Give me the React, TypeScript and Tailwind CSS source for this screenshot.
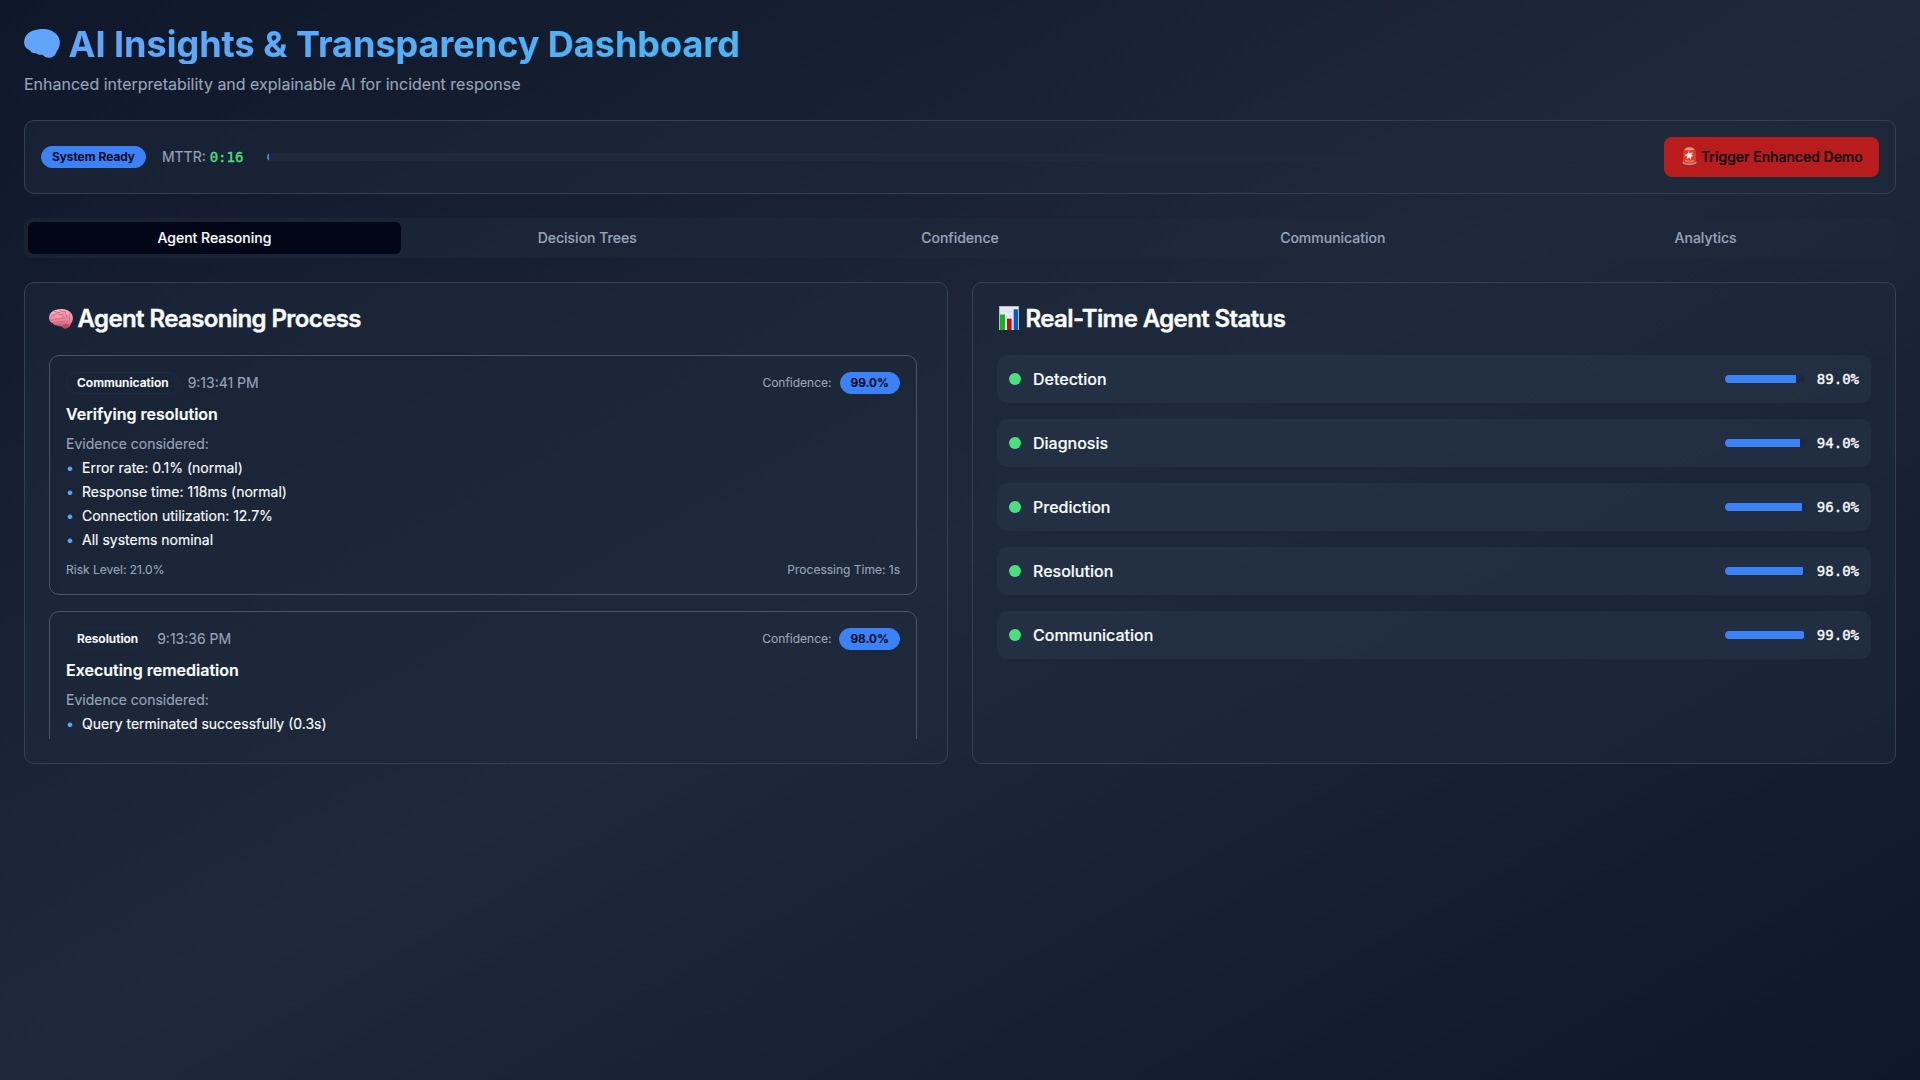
import React from "react";

const BRAIN =
  "M1 15C.5 9 4 4 10 2.2 15 .4 22 0 27 2c5 2 8.500 6 8.800 11 .2 4-1 7.500-3 9.500-.6 3-3.500 6.500-7.800 6.500-2.500 0-4.500-1-6-3-2.500.3-5-.2-6.500-1.500-3 .2-5-.8-6-3C3 20.500 1.300 18 1 15Z";

function BrainShape({ className }: { className: string }) {
  return (
    <svg viewBox="0.8 0.6 35.200 28.600" className={className} preserveAspectRatio="none" aria-hidden="true">
      <path d={BRAIN} fill="#60a5fa" />
    </svg>
  );
}

function BrainEmoji({ className }: { className: string }) {
  return (
    <svg viewBox="0.8 0.6 35.200 29.400" className={className} preserveAspectRatio="none" aria-hidden="true">
      <defs>
        <linearGradient id="brain" x1="0" y1="0" x2="0" y2="1">
          <stop offset="0" stopColor="#fbb4c4" />
          <stop offset="0.55" stopColor="#ee8aa2" />
          <stop offset="1" stopColor="#c4506c" />
        </linearGradient>
      </defs>
      <path d="M20 22h8l-1 7-4 .8c-2-1.500-3-4-3-7.800Z" fill="#a63c50" />
      <path d={BRAIN} fill="url(#brain)" />
      <g fill="none" stroke="#c4607c" strokeWidth="1.300" strokeLinecap="round">
        <path d="M4 12c3-1 4-4 8-4M9 4c3 0 4 3 8 2M17 2c1 3 5 3 7 2M3 17c4 1 7-3 11-2s5-2 9-1M14 8c3 2 6 1 8-1M25 5c-1 4 3 5 2 9M31 8c-2 3 1 5 0 9M8 20c4 1 6-2 10-1s6-2 10 0M20 10c2 1 4 2 4 4M12 24c3 0 4-2 8-2" />
      </g>
      <path d="M21 24c3-2 7-2 9 0-1 3-3 5-6 5s-3-3-3-5Z" fill="#b84860" />
    </svg>
  );
}

function ChartEmoji({ className }: { className: string }) {
  return (
    <svg viewBox="0 0 20 24" className={className} aria-hidden="true">
      <rect width="20" height="24" fill="#9fabb9" />
      <rect x="0.700" y="0.700" width="18.600" height="23.300" fill="#e3eaf3" />
      <path d="M1 5.500h18M1 10.500h18M1 15.500h18" stroke="#ced8e4" strokeWidth="0.500" />
      <rect x="1" y="8.500" width="5" height="15.500" fill="#10b41c" />
      <rect x="8" y="12.700" width="4.600" height="11.300" fill="#c40d12" />
      <rect x="14.700" y="3.300" width="4.300" height="20.700" fill="#0b59c4" />
    </svg>
  );
}

function SirenEmoji({ className }: { className: string }) {
  return (
    <svg viewBox="0 0 15 18" className={className} aria-hidden="true">
      <path d="M.5 14.500h14v1.300c0 1.200-3 2.200-7 2.200s-7-1-7-2.200Z" fill="#a5a09f" />
      <path d="M1.500 3.500C1.700 1.200 4 0 7.500 0s5.800 1.200 6 3.500l.8 11c-1 1.500-3.500 2-6.800 2s-5.800-.5-6.800-2Z" fill="#e2392b" />
      <path d="M2.500 2.500C3.500 1 5.500.6 7.500.6s4 .4 5 1.900c-2 1.200-8 1.200-10 0Z" fill="#f59b8c" />
      <path d="M3 12.500c2 1.500 7 1.500 9 0v2c-2 1.200-7 1.200-9 0Z" fill="#f0705f" />
      <path d="m6.500 4 1 2.600L11 5.200 9.200 8l2.300 1-2.700.7.300 3.300-2-2.500L4.500 12l.8-2.700-3-1.300 3.200-.8Z" fill="#fff1ee" />
      <circle cx="7" cy="8.300" r="1.700" fill="#fff" />
    </svg>
  );
}

type Step = {
  agent: string;
  time: string;
  confidence: string;
  title: string;
  evidence: string[];
  risk?: string;
  processing?: string;
};

const steps: Step[] = [
  {
    agent: "Communication",
    time: "9:13:41 PM",
    confidence: "99.0%",
    title: "Verifying resolution",
    evidence: [
      "Error rate: 0.1% (normal)",
      "Response time: 118ms (normal)",
      "Connection utilization: 12.7%",
      "All systems nominal",
    ],
    risk: "21.0%",
    processing: "1s",
  },
  {
    agent: "Resolution",
    time: "9:13:36 PM",
    confidence: "98.0%",
    title: "Executing remediation",
    evidence: ["Query terminated successfully (0.3s)"],
  },
];

const agents = [
  { name: "Detection", value: 89 },
  { name: "Diagnosis", value: 94 },
  { name: "Prediction", value: 96 },
  { name: "Resolution", value: 98 },
  { name: "Communication", value: 99 },
];

const tabs = ["Agent Reasoning", "Decision Trees", "Confidence", "Communication", "Analytics"];

function Badge({ children, outline = false }: { children: React.ReactNode; outline?: boolean }) {
  return (
    <span
      className={
        "inline-flex items-center rounded-full border px-2.5 py-0.5 text-xs font-semibold " +
        (outline ? "border-[#1e293b] text-[#f8fafc]" : "border-[#3b82f6] bg-[#3b82f6] text-[#020617]")
      }
    >
      {children}
    </span>
  );
}

function StepCard({ step }: { step: Step }) {
  return (
    <article className="min-h-60 shrink-0 rounded-[10px] border border-[#475569] p-4">
      <div className="mb-2 flex items-center justify-between">
        <div className="flex h-[22px] items-center gap-2">
          <Badge outline>{step.agent}</Badge>
          <span className="text-sm text-[#94a3b8]">{step.time}</span>
        </div>
        <div className="flex h-[22px] items-center gap-2">
          <span className="text-xs text-[#94a3b8]">Confidence:</span>
          <Badge>{step.confidence}</Badge>
        </div>
      </div>
      <h4 className="mb-2 text-base font-semibold">{step.title}</h4>
      <div className="mb-1 text-sm text-[#94a3b8]">Evidence considered:</div>
      <ul className="mb-3 space-y-1 text-sm">
        {step.evidence.map((e) => (
          <li key={e} className="flex items-start">
            <span className="w-4 text-[#60a5fa]">•</span>
            <span>{e}</span>
          </li>
        ))}
      </ul>
      {step.risk && (
        <div className="flex justify-between text-xs text-[#94a3b8]">
          <span>Risk Level: {step.risk}</span>
          <span>Processing Time: {step.processing}</span>
        </div>
      )}
    </article>
  );
}

export default function App() {
  return (
    <div className="h-screen overflow-hidden bg-linear-to-br/srgb from-[#0f172a] via-[#1e293b] to-[#0f172a] p-6 font-['Inter',sans-serif] text-[#f8fafc] antialiased [-webkit-text-stroke:0.15px]">
      <header className="mb-6">
        <h1 className="flex h-10 items-start text-4xl font-bold">
          <BrainShape className="mt-[5px] mr-[8.5px] h-[29px] w-9 shrink-0" />
          <span className="w-[1827px] bg-linear-to-r/srgb from-[#60a5fa] to-[#22d3ee] bg-clip-text text-transparent">
            AI Insights &amp; Transparency Dashboard
          </span>
        </h1>
        <p className="mt-2 text-base text-[#94a3b8]">
          Enhanced interpretability and explainable AI for incident response
        </p>
      </header>

      <section className="mb-6 flex items-center rounded-[10px] border border-[#334155] bg-[#1e293b]/50 p-4">
        <Badge>System Ready</Badge>
        <div className="ml-4 text-sm text-[#94a3b8]">
          MTTR:{" "}
          <span className="font-['DejaVu_Sans_Mono',monospace] text-[#4ade80] [-webkit-text-stroke:0.4px]">0:16</span>
        </div>
        <div className="mx-6 h-2 flex-1 overflow-hidden rounded-full bg-[#1e293b]">
          <div className="h-full w-[1.5px] bg-[#3b82f6]" />
        </div>
        <button className="flex h-10 w-[215px] items-center rounded-lg bg-[#b91c1c] pl-[18px] text-sm font-medium whitespace-nowrap text-[#020617]">
          <SirenEmoji className="mr-1 -mt-0.5 h-[18px] w-[15px] shrink-0" />
          Trigger Enhanced Demo
        </button>
      </section>

      <nav className="mb-6 grid h-10 grid-cols-5 rounded-lg bg-[#1e293b]/50 p-1">
        {tabs.map((t, i) => (
          <button
            key={t}
            className={
              "flex items-center justify-center rounded-md text-sm font-medium " +
              (i === 0 ? "bg-[#020617] text-[#f8fafc]" : "text-[#94a3b8]")
            }
          >
            {t}
          </button>
        ))}
      </nav>

      <main className="grid grid-cols-2 gap-6">
        <section className="rounded-[10px] border border-[#334155] bg-[#1e293b]/50 p-6">
          <h3 className="mb-6 flex h-6 items-center text-2xl leading-none font-semibold tracking-tight [-webkit-text-stroke:0.4px]">
            <BrainEmoji className="mr-[4.5px] h-5 w-6 shrink-0" />
            Agent Reasoning Process
          </h3>
          <div className="flex h-96 flex-col gap-4 overflow-hidden pr-1.5">
            {steps.map((s) => (
              <StepCard key={s.agent} step={s} />
            ))}
          </div>
        </section>

        <section className="rounded-[10px] border border-[#334155] bg-[#1e293b]/50 p-6">
          <h3 className="mb-6 flex h-6 items-center text-2xl leading-none font-semibold tracking-tight [-webkit-text-stroke:0.4px]">
            <ChartEmoji className="-mt-0.5 mr-[6.5px] ml-0.5 h-6 w-5 shrink-0" />
            Real-Time Agent Status
          </h3>
          <div className="flex flex-col gap-4">
            {agents.map((a) => (
              <div key={a.name} className="flex h-12 items-center justify-between rounded-[10px] bg-[#334155]/30 p-3">
                <div className="flex items-center gap-3">
                  <span className="size-3 rounded-full bg-[#4ade80]" />
                  <span className="font-medium">{a.name}</span>
                </div>
                <div className="flex items-center gap-3">
                  <div className="h-2 w-20 overflow-hidden rounded-full bg-[#1e293b]">
                    <div className="h-full bg-[#3b82f6]" style={{ width: `${a.value}%` }} />
                  </div>
                  <span className="font-['DejaVu_Sans_Mono',monospace] text-sm [-webkit-text-stroke:0.4px]">
                    {a.value.toFixed(1)}%
                  </span>
                </div>
              </div>
            ))}
          </div>
        </section>
      </main>
    </div>
  );
}
